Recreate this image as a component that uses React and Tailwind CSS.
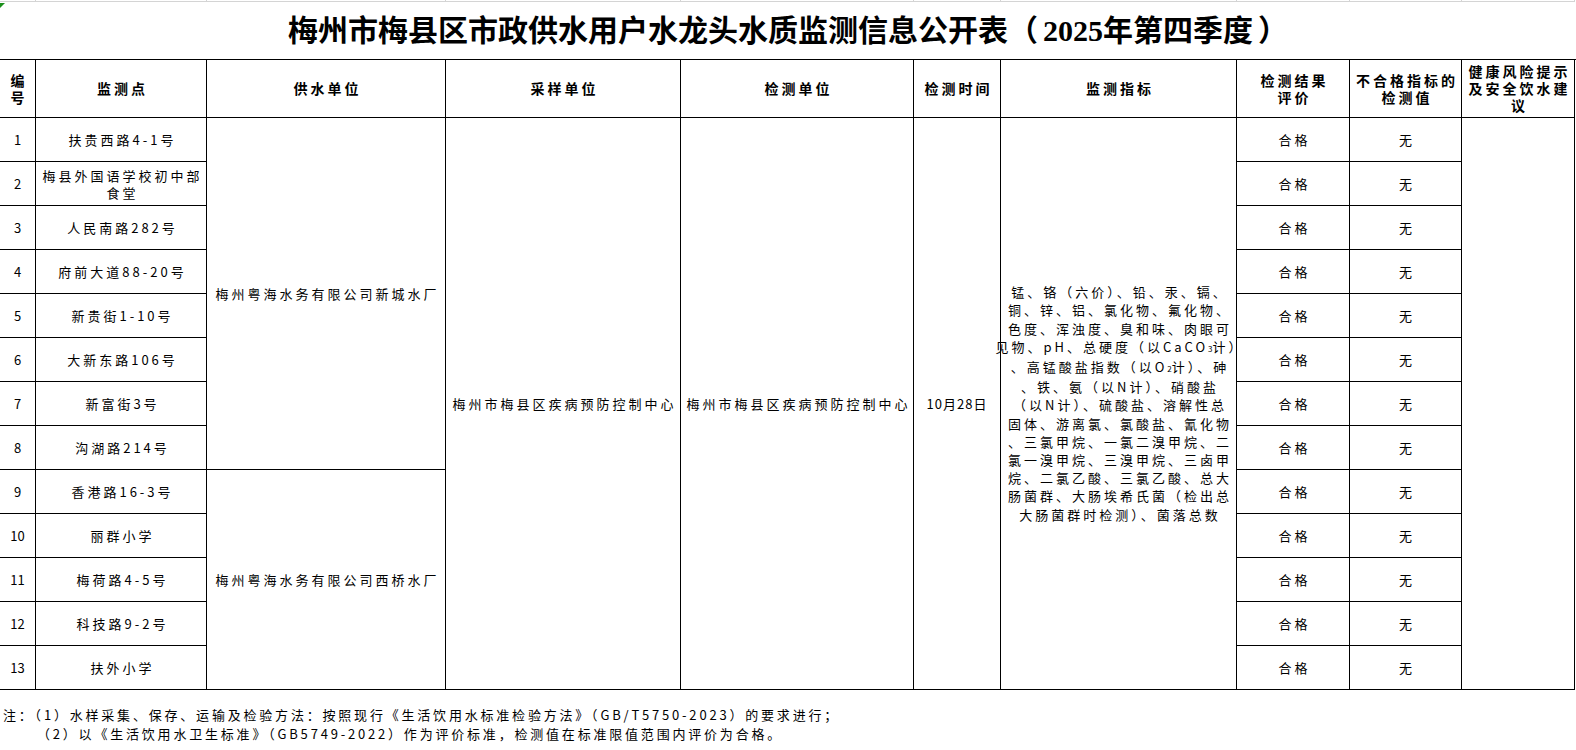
import React from "react";

const ROW = ["row-start-2", "row-start-3", "row-start-4", "row-start-5", "row-start-6", "row-start-7", "row-start-8", "row-start-9", "row-start-10", "row-start-11", "row-start-12", "row-start-13", "row-start-14"];

const sites = [
  ["扶贵西路4-1号"],
  ["梅县外国语学校初中部", "食堂"],
  ["人民南路282号"],
  ["府前大道88-20号"],
  ["新贵街1-10号"],
  ["大新东路106号"],
  ["新富街3号"],
  ["沟湖路214号"],
  ["香港路16-3号"],
  ["丽群小学"],
  ["梅荷路4-5号"],
  ["科技路9-2号"],
  ["扶外小学"],
];

const indicators = [
  "锰、铬（六价）、铅、汞、镉、",
  "铜、锌、铝、氯化物、氟化物、",
  "色度、浑浊度、臭和味、肉眼可",
  <>见物、pH、总硬度（以CaCO<span className="text-[8px] tracking-normal">3</span>计）</>,
  <>、高锰酸盐指数（以O<span className="text-[8px] tracking-normal">2</span>计）、砷</>,
  "、铁、氨（以N计）、硝酸盐",
  "（以N计）、硫酸盐、溶解性总",
  "固体、游离氯、氯酸盐、氰化物",
  "、三氯甲烷、一氯二溴甲烷、二",
  "氯一溴甲烷、三溴甲烷、三卤甲",
  "烷、二氯乙酸、三氯乙酸、总大",
  "肠菌群、大肠埃希氏菌（检出总",
  "大肠菌群时检测）、菌落总数",
];

const cell = "flex items-center justify-center text-center border-r border-b border-black";
const head = "text-[14px] font-bold tracking-[3px] leading-[17px] pl-[3px]";
const body = "text-[13px] tracking-[3px] leading-[17px] pl-[3px]";

export default function App() {
  return (
    <div className="w-[1576px] h-[750px] bg-white text-black font-['Noto_Sans_CJK_SC',sans-serif] overflow-hidden">
      {/* spreadsheet row above */}
      <div className="grid grid-cols-[36px_171px_239px_235px_233px_87px_236px_113px_112px_113px] h-[2px]">
        {Array.from({ length: 10 }).map((_, i) => (
          <div key={i} className="border-r border-b border-[#d4d4d4]" />
        ))}
      </div>

      <div className="relative h-[57px] flex items-center justify-center">
        <div className="absolute left-0 top-[1px] w-0 h-0 border-t-[5px] border-t-[#1a8f1a] border-r-[5px] border-r-transparent" />
        <h1 className="text-[30px] font-bold leading-none font-['Liberation_Serif','Noto_Sans_CJK_SC',serif]">
          梅州市梅县区市政供水用户水龙头水质监测信息公开表（<span className="mx-[5px]">2025年第四季度</span>）
        </h1>
      </div>

      <div className="grid grid-cols-[36px_171px_239px_235px_233px_87px_236px_113px_112px_113px] grid-rows-[58px_repeat(13,44px)] border-t border-black">
        <div className={`${cell} col-start-1 row-start-1 text-[14px] font-bold leading-[17px]`}>编<br />号</div>
        <div className={`${cell} ${head} col-start-2 row-start-1`}>监测点</div>
        <div className={`${cell} ${head} col-start-3 row-start-1`}>供水单位</div>
        <div className={`${cell} ${head} col-start-4 row-start-1`}>采样单位</div>
        <div className={`${cell} ${head} col-start-5 row-start-1`}>检测单位</div>
        <div className={`${cell} ${head} col-start-6 row-start-1`}>检测时间</div>
        <div className={`${cell} ${head} col-start-7 row-start-1`}>监测指标</div>
        <div className={`${cell} ${head} col-start-8 row-start-1`}>检测结果<br />评价</div>
        <div className={`${cell} ${head} col-start-9 row-start-1`}>不合格指标的<br />检测值</div>
        <div className={`${cell} ${head} col-start-10 row-start-1`}>健康风险提示<br />及安全饮水建<br />议</div>

        {sites.map((s, i) => (
          <React.Fragment key={i}>
            <div className={`${cell} col-start-1 ${ROW[i]} text-[13px]`}>{i + 1}</div>
            <div className={`${cell} col-start-2 ${ROW[i]} ${body}`}>
              <div>
                {s[0]}
                {s[1] && <><br />{s[1]}</>}
              </div>
            </div>
            <div className={`${cell} col-start-8 ${ROW[i]} ${body}`}>合格</div>
            <div className={`${cell} col-start-9 ${ROW[i]} ${body}`}>无</div>
          </React.Fragment>
        ))}

        <div className={`${cell} ${body} col-start-3 row-start-2 row-span-8`}>梅州粤海水务有限公司新城水厂</div>
        <div className={`${cell} ${body} col-start-3 row-start-10 row-span-5`}>梅州粤海水务有限公司西桥水厂</div>
        <div className={`${cell} ${body} col-start-4 row-start-2 row-span-13`}>梅州市梅县区疾病预防控制中心</div>
        <div className={`${cell} ${body} col-start-5 row-start-2 row-span-13`}>梅州市梅县区疾病预防控制中心</div>
        <div className={`${cell} text-[13px] tracking-[1px] col-start-6 row-start-2 row-span-13`}>10月28日</div>
        <div className={`${cell} col-start-7 row-start-2 row-span-13`}>
          <div className="text-[13px] tracking-[3px] leading-[18.2px] pl-[3px] whitespace-nowrap">
            {indicators.map((l, i) => (
              <div key={i}>{l}</div>
            ))}
          </div>
        </div>
        <div className={`${cell} col-start-10 row-start-2 row-span-13`} />
      </div>

      <div className="pt-[15px] pl-[3px] text-[13px] tracking-[2.8px] leading-[19px] whitespace-nowrap">
        <div>注：（1）水样采集、保存、运输及检验方法：按照现行《生活饮用水标准检验方法》（GB/T5750-2023）的要求进行；</div>
        <div className="pl-[34px]">（2）以《生活饮用水卫生标准》（GB5749-2022）作为评价标准，检测值在标准限值范围内评价为合格。</div>
      </div>
    </div>
  );
}
